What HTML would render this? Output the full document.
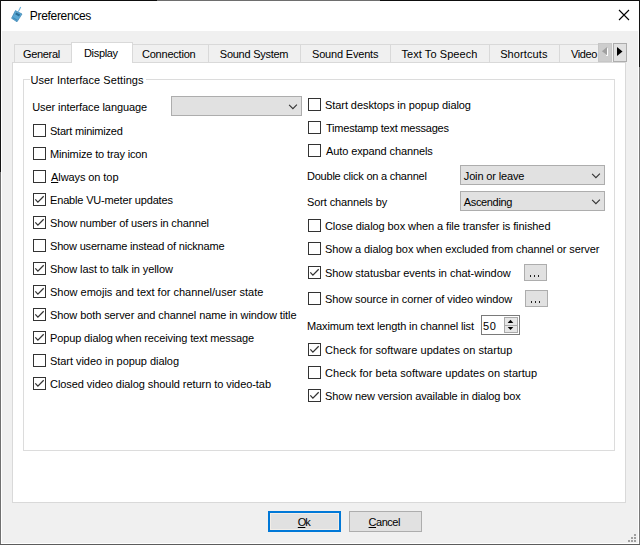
<!DOCTYPE html>
<html><head><meta charset="utf-8">
<style>
html,body{margin:0;padding:0;width:640px;height:545px;overflow:hidden;background:#f0f0f0;}
body{position:relative;font-family:"Liberation Sans",sans-serif;font-size:11px;color:#000;}
.a{position:absolute;box-sizing:border-box;}
.t{position:absolute;white-space:nowrap;font:11px/13px "Liberation Sans",sans-serif;color:#000;}
.cb{position:absolute;width:13px;height:13px;box-sizing:border-box;border:1px solid #333;background:#fff;}
.cb svg{position:absolute;left:0;top:0;}
.combo{position:absolute;box-sizing:border-box;height:20px;border:1px solid #adadad;background:#e1e1e1;}
.combo svg{position:absolute;top:7px;right:1px;}
.btn{position:absolute;box-sizing:border-box;border:1px solid #adadad;background:#e1e1e1;}
.tab{position:absolute;box-sizing:border-box;top:44px;height:18px;border:1px solid #d9d9d9;border-bottom:none;background:#f0f0f0;}
</style></head>
<body>
<div class="a" style="left:0;top:0;width:640px;height:1px;background:#0d0d0d;"></div>
<div class="a" style="left:157px;top:0;width:223px;height:1px;background:#6e6e6e;"></div>
<div class="a" style="left:0;top:0;width:1px;height:172px;background:#141414;"></div>
<div class="a" style="left:0;top:172px;width:1px;height:373px;background:#707070;"></div>
<div class="a" style="left:639px;top:0;width:1px;height:67px;background:#141414;"></div>
<div class="a" style="left:639px;top:67px;width:1px;height:478px;background:#7a7a7a;"></div>
<div class="a" style="left:0;top:544px;width:640px;height:1px;background:#5c5c5c;"></div>
<div class="a" style="left:1px;top:1px;width:638px;height:30px;background:#fff;"></div>
<div class="a" style="left:1px;top:31px;width:1px;height:513px;background:#fff;"></div>
<div class="a" style="left:638px;top:31px;width:1px;height:513px;background:#fff;"></div>
<div class="a" style="left:1px;top:543px;width:638px;height:1px;background:#fff;"></div>
<svg class="a" style="left:8px;top:4px" width="20" height="20" viewBox="0 0 20 20">
  <line x1="10.4" y1="7.5" x2="12.7" y2="3.1" stroke="#6db4dc" stroke-width="1.1"/>
  <polygon points="7.4,6.6 14,10 9,17.8 3.6,14.3" fill="#5aa8d4" stroke="#3b83b0" stroke-width="0.7"/>
  <polygon points="8.2,8.6 12.2,10.6 11,12.4 7.2,10.3" fill="#2b6f98"/>
  <polygon points="4.6,14.2 9,16.8 9.6,15.8 5.2,13.2" fill="#3f8cba"/>
</svg>

<div class="t" style="left:29.80px;top:9px;font-size:12px;line-height:14px;letter-spacing:-0.320px;">Preferences</div>
<svg class="a" style="left:618px;top:9px" width="12" height="12" viewBox="0 0 12 12">
  <path d="M1 1 L11 11 M11 1 L1 11" stroke="#000" stroke-width="1.1"/>
</svg>
<div class="a" style="left:12px;top:62px;width:614px;height:441px;border:1px solid #d9d9d9;background:#fff;"></div>

<div class="tab" style="left:14px;width:58px;"></div>
<div class="t" style="left:23.00px;top:48px;letter-spacing:-0.333px;">General</div>
<div class="tab" style="left:132px;width:77px;"></div>
<div class="t" style="left:142.00px;top:48px;letter-spacing:-0.222px;">Connection</div>
<div class="tab" style="left:208px;width:93px;"></div>
<div class="t" style="left:219.80px;top:48px;letter-spacing:-0.255px;">Sound System</div>
<div class="tab" style="left:300px;width:91px;"></div>
<div class="t" style="left:312.00px;top:48px;letter-spacing:-0.182px;">Sound Events</div>
<div class="tab" style="left:390px;width:100px;"></div>
<div class="t" style="left:401.40px;top:48px;letter-spacing:0.077px;">Text To Speech</div>
<div class="tab" style="left:489px;width:71px;"></div>
<div class="t" style="left:500.20px;top:48px;letter-spacing:0.100px;">Shortcuts</div>
<div class="tab" style="left:559px;width:50px;"></div>
<div class="t" style="left:571.00px;top:48px;letter-spacing:-0.400px;">Video</div>
<div class="a" style="left:71px;top:42px;width:62px;height:21px;border:1px solid #d9d9d9;border-bottom:none;background:#fff;"></div>
<div class="t" style="left:84.00px;top:47px;letter-spacing:-0.333px;">Display</div>
<div class="a" style="left:598px;top:43px;width:14px;height:19px;background:#cdcdcd;border:1px solid #c6c6c6;"></div>
<svg class="a" style="left:598px;top:43px" width="14" height="19" viewBox="0 0 14 19">
  <polygon points="3.9,8.3 9.05,3.9 9.05,12.1" fill="#a0a0a0"/>
  <rect x="9.05" y="5.2" width="1" height="7.6" fill="#fff"/>
  <rect x="8" y="12" width="2" height="0.8" fill="#fff"/>
</svg>
<div class="a" style="left:613px;top:43px;width:14px;height:19px;border:1px solid #adadad;background:#e1e1e1;"></div>
<svg class="a" style="left:613px;top:43px" width="14" height="19" viewBox="0 0 14 19">
  <polygon points="4,4 9.5,8.5 4,13" fill="#000"/>
</svg>
<div class="a" style="left:23px;top:79px;width:592px;height:372px;border:1px solid #dcdcdc;"></div>
<div class="a" style="left:30px;top:73px;width:116px;height:12px;background:#fff;"></div>

<div class="t" style="left:30.40px;top:74px;letter-spacing:0.055px;">User Interface Settings</div>
<div class="t" style="left:32.20px;top:101px;letter-spacing:-0.082px;">User interface language</div>
<div class="combo" style="left:171px;top:96px;width:131px;"><svg width="12" height="7" viewBox="0 0 12 7"><path d="M1.1 0.8 L4.9 4.6 L8.9 0.6" fill="none" stroke="#333" stroke-width="1.1"/></svg></div>
<div class="cb" style="left:33px;top:124px;"></div>
<div class="t" style="left:50.00px;top:125px;letter-spacing:-0.214px;">Start minimized</div>
<div class="cb" style="left:33px;top:147px;"></div>
<div class="t" style="left:50.00px;top:148px;letter-spacing:-0.140px;">Minimize to tray icon</div>
<div class="cb" style="left:33px;top:170px;"></div>
<div class="t" style="left:51.00px;top:171px;letter-spacing:-0.083px;"><u>A</u>lways on top</div>
<div class="cb" style="left:33px;top:193px;"><svg width="13" height="13" viewBox="0 0 13 13"><path d="M1.3 5.4 L3.9 8.1 L9.7 2.3" fill="none" stroke="#333" stroke-width="1.3"/></svg></div>
<div class="t" style="left:50.00px;top:194px;letter-spacing:-0.164px;">Enable VU-meter updates</div>
<div class="cb" style="left:33px;top:216px;"><svg width="13" height="13" viewBox="0 0 13 13"><path d="M1.3 5.4 L3.9 8.1 L9.7 2.3" fill="none" stroke="#333" stroke-width="1.3"/></svg></div>
<div class="t" style="left:50.00px;top:217px;letter-spacing:-0.140px;">Show number of users in channel</div>
<div class="cb" style="left:33px;top:239px;"></div>
<div class="t" style="left:50.00px;top:240px;letter-spacing:-0.181px;">Show username instead of nickname</div>
<div class="cb" style="left:33px;top:262px;"><svg width="13" height="13" viewBox="0 0 13 13"><path d="M1.3 5.4 L3.9 8.1 L9.7 2.3" fill="none" stroke="#333" stroke-width="1.3"/></svg></div>
<div class="t" style="left:50.00px;top:263px;letter-spacing:-0.092px;">Show last to talk in yellow</div>
<div class="cb" style="left:33px;top:285px;"><svg width="13" height="13" viewBox="0 0 13 13"><path d="M1.3 5.4 L3.9 8.1 L9.7 2.3" fill="none" stroke="#333" stroke-width="1.3"/></svg></div>
<div class="t" style="left:50.00px;top:286px;">Show emojis and text for channel/user state</div>
<div class="cb" style="left:33px;top:308px;"><svg width="13" height="13" viewBox="0 0 13 13"><path d="M1.3 5.4 L3.9 8.1 L9.7 2.3" fill="none" stroke="#333" stroke-width="1.3"/></svg></div>
<div class="t" style="left:50.00px;top:309px;letter-spacing:-0.087px;">Show both server and channel name in window title</div>
<div class="cb" style="left:33px;top:331px;"><svg width="13" height="13" viewBox="0 0 13 13"><path d="M1.3 5.4 L3.9 8.1 L9.7 2.3" fill="none" stroke="#333" stroke-width="1.3"/></svg></div>
<div class="t" style="left:50.00px;top:332px;letter-spacing:-0.128px;">Popup dialog when receiving text message</div>
<div class="cb" style="left:33px;top:354px;"></div>
<div class="t" style="left:50.00px;top:355px;letter-spacing:-0.046px;">Start video in popup dialog</div>
<div class="cb" style="left:33px;top:377px;"><svg width="13" height="13" viewBox="0 0 13 13"><path d="M1.3 5.4 L3.9 8.1 L9.7 2.3" fill="none" stroke="#333" stroke-width="1.3"/></svg></div>
<div class="t" style="left:50.00px;top:378px;letter-spacing:-0.062px;">Closed video dialog should return to video-tab</div>
<div class="cb" style="left:308px;top:98px;"></div>
<div class="t" style="left:325.00px;top:99px;letter-spacing:-0.069px;">Start desktops in popup dialog</div>
<div class="cb" style="left:308px;top:121px;"></div>
<div class="t" style="left:326.00px;top:122px;letter-spacing:-0.227px;">Timestamp text messages</div>
<div class="cb" style="left:308px;top:144px;"></div>
<div class="t" style="left:326.00px;top:145px;letter-spacing:-0.105px;">Auto expand channels</div>
<div class="cb" style="left:308px;top:219px;"></div>
<div class="t" style="left:325.00px;top:220px;letter-spacing:-0.079px;">Close dialog box when a file transfer is finished</div>
<div class="cb" style="left:308px;top:242px;"></div>
<div class="t" style="left:325.00px;top:243px;letter-spacing:-0.094px;">Show a dialog box when excluded from channel or server</div>
<div class="cb" style="left:308px;top:266px;"><svg width="13" height="13" viewBox="0 0 13 13"><path d="M1.3 5.4 L3.9 8.1 L9.7 2.3" fill="none" stroke="#333" stroke-width="1.3"/></svg></div>
<div class="t" style="left:325.00px;top:267px;letter-spacing:-0.040px;">Show statusbar events in chat-window</div>
<div class="cb" style="left:308px;top:292px;"></div>
<div class="t" style="left:325.00px;top:293px;letter-spacing:-0.100px;">Show source in corner of video window</div>
<div class="cb" style="left:308px;top:343px;"><svg width="13" height="13" viewBox="0 0 13 13"><path d="M1.3 5.4 L3.9 8.1 L9.7 2.3" fill="none" stroke="#333" stroke-width="1.3"/></svg></div>
<div class="t" style="left:325.00px;top:344px;letter-spacing:0.039px;">Check for software updates on startup</div>
<div class="cb" style="left:308px;top:366px;"></div>
<div class="t" style="left:325.00px;top:367px;letter-spacing:0.044px;">Check for beta software updates on startup</div>
<div class="cb" style="left:308px;top:389px;"><svg width="13" height="13" viewBox="0 0 13 13"><path d="M1.3 5.4 L3.9 8.1 L9.7 2.3" fill="none" stroke="#333" stroke-width="1.3"/></svg></div>
<div class="t" style="left:325.00px;top:390px;letter-spacing:-0.123px;">Show new version available in dialog box</div>
<div class="t" style="left:307.00px;top:170px;letter-spacing:-0.229px;">Double click on a channel</div>
<div class="combo" style="left:460px;top:165px;width:145px;"><svg width="12" height="7" viewBox="0 0 12 7"><path d="M1.1 0.8 L4.9 4.6 L8.9 0.6" fill="none" stroke="#333" stroke-width="1.1"/></svg></div>
<div class="t" style="left:463.80px;top:170px;letter-spacing:-0.150px;">Join or leave</div>
<div class="t" style="left:307.00px;top:196px;letter-spacing:-0.120px;">Sort channels by</div>
<div class="combo" style="left:460px;top:191px;width:145px;"><svg width="12" height="7" viewBox="0 0 12 7"><path d="M1.1 0.8 L4.9 4.6 L8.9 0.6" fill="none" stroke="#333" stroke-width="1.1"/></svg></div>
<div class="t" style="left:463.80px;top:196px;letter-spacing:-0.350px;">Ascending</div>
<div class="btn" style="left:524px;top:264px;width:23px;height:17px;"></div>
<div class="a" style="left:530px;top:275px;width:1px;height:2px;background:#222;"></div><div class="a" style="left:534px;top:275px;width:1px;height:2px;background:#222;"></div><div class="a" style="left:538px;top:275px;width:1px;height:2px;background:#222;"></div>
<div class="btn" style="left:525px;top:290px;width:23px;height:17px;"></div>
<div class="a" style="left:531px;top:301px;width:1px;height:2px;background:#222;"></div><div class="a" style="left:535px;top:301px;width:1px;height:2px;background:#222;"></div><div class="a" style="left:539px;top:301px;width:1px;height:2px;background:#222;"></div>
<div class="t" style="left:307.00px;top:320px;letter-spacing:-0.124px;">Maximum text length in channel list</div>
<div class="a" style="left:481px;top:315px;width:39px;height:20px;border:1px solid #7a7a7a;background:#fff;"></div>
<div class="t" style="left:483.00px;top:320px;letter-spacing:0.600px;">50</div>
<div class="a" style="left:504px;top:317px;width:14px;height:9px;background:#e6e6e6;border:1px solid #a9a9a9;"></div>
<div class="a" style="left:504px;top:325px;width:14px;height:8px;background:#e6e6e6;border:1px solid #a9a9a9;"></div>
<svg class="a" style="left:504px;top:317px" width="14" height="16" viewBox="0 0 14 16"><polygon points="6.5,2.8 9.3,6 3.7,6" fill="#000"/><polygon points="3.7,9.9 9.3,9.9 6.5,13.1" fill="#000"/></svg>
<div class="a" style="left:268px;top:511px;width:73px;height:21px;border:2px solid #0078d7;background:#e1e1e1;box-shadow:inset 0 0 0 1px #f3eee8;"></div>

<div class="t" style="left:297.80px;top:516px;letter-spacing:-1.000px;"><u>O</u>k</div>
<div class="btn" style="left:349px;top:511px;width:73px;height:21px;"></div>
<div class="t" style="left:368.60px;top:516px;letter-spacing:-0.480px;"><u>C</u>ancel</div>
<div class="a" style="left:634px;top:534px;width:2px;height:2px;background:#a0a0a0;"></div>
<div class="a" style="left:631px;top:537px;width:2px;height:2px;background:#a0a0a0;"></div>
<div class="a" style="left:634px;top:537px;width:2px;height:2px;background:#a0a0a0;"></div>
<div class="a" style="left:628px;top:540px;width:2px;height:2px;background:#a0a0a0;"></div>
<div class="a" style="left:631px;top:540px;width:2px;height:2px;background:#a0a0a0;"></div>
<div class="a" style="left:634px;top:540px;width:2px;height:2px;background:#a0a0a0;"></div>
</body></html>
